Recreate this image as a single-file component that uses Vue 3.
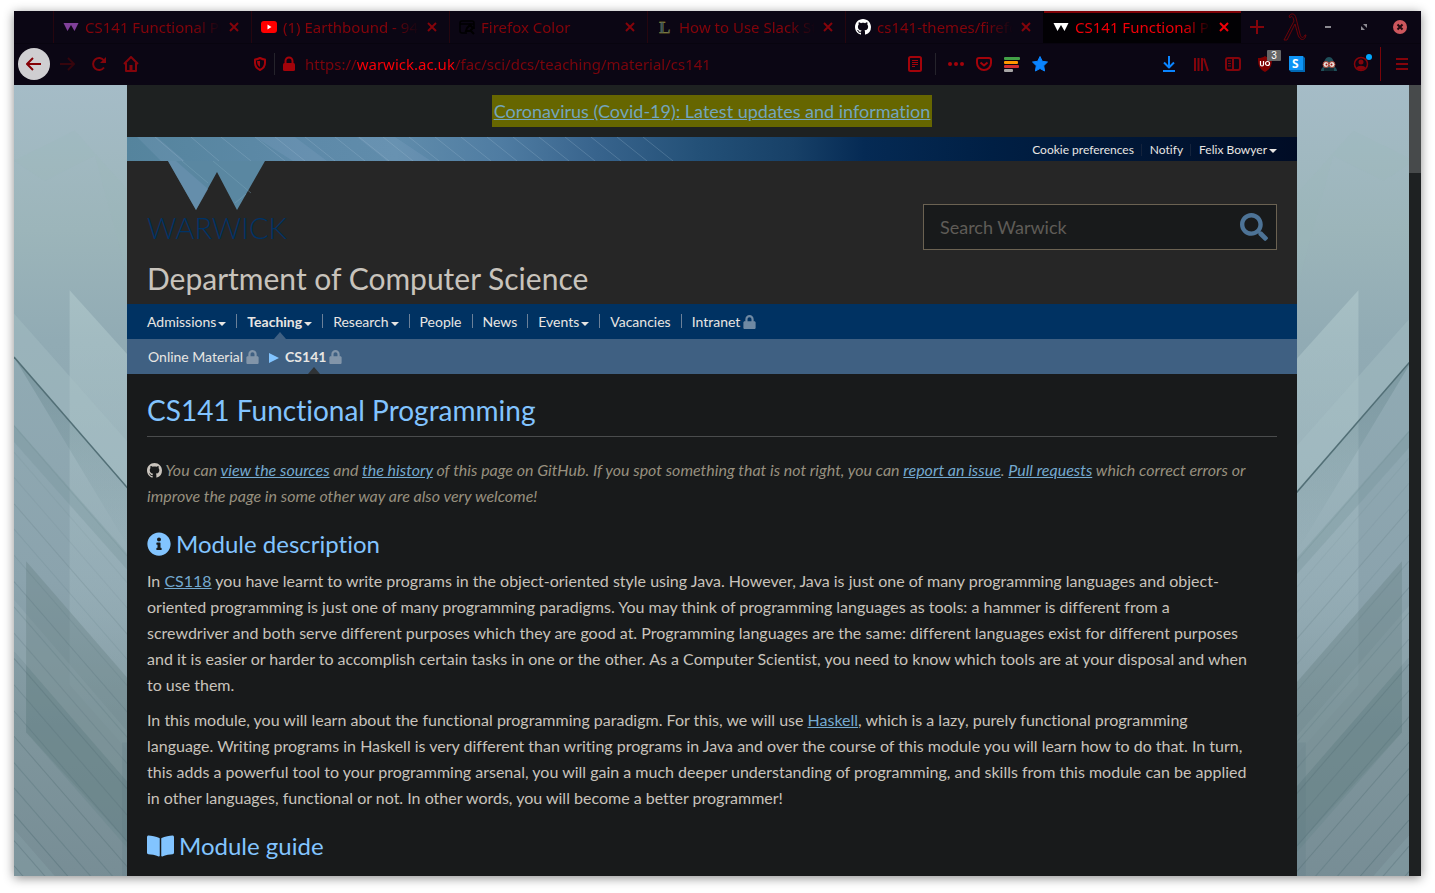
<script setup>
import { ref } from 'vue'

const tabs = [
  { title: 'CS141 Functional Programming', icon: 'warwick', tint: '#80409a' },
  { title: '(1) Earthbound - 94 minutes', icon: 'youtube' },
  { title: 'Firefox Color', icon: 'color' },
  { title: 'How to Use Slack Status', icon: 'letter' },
  { title: 'cs141-themes/firefox', icon: 'github' },
  { title: 'CS141 Functional Programming', icon: 'warwick', tint: '#ffffff', active: true },
]

const nav = [
  { label: 'Admissions', menu: true },
  { label: 'Teaching', menu: true, current: true },
  { label: 'Research', menu: true },
  { label: 'People' },
  { label: 'News' },
  { label: 'Events', menu: true },
  { label: 'Vacancies' },
  { label: 'Intranet', locked: true },
]

const address = ref('https://warwick.ac.uk/fac/sci/dcs/teaching/material/cs141')
const query = ref('')

const stripes = Array.from({ length: 18 }, (_, i) => ({
  y: 337 + Math.round(i * 25.6),
  o: 0.05 + i * 0.018 + (i % 3 === 0 ? 0.06 : 0),
}))

const githubPath =
  'M8 0C3.58 0 0 3.58 0 8c0 3.54 2.29 6.53 5.47 7.59.4.07.55-.17.55-.38 0-.19-.01-.82-.01-1.49-2.01.37-2.53-.49-2.69-.94-.09-.23-.48-.94-.82-1.13-.28-.15-.68-.52-.01-.53.63-.01 1.08.58 1.23.82.72 1.21 1.87.87 2.33.66.07-.52.28-.87.51-1.07-1.78-.2-3.64-.89-3.64-3.95 0-.87.31-1.59.82-2.15-.08-.2-.36-1.02.08-2.12 0 0 .67-.21 2.2.82.64-.18 1.32-.27 2-.27s1.36.09 2 .27c1.53-1.04 2.2-.82 2.2-.82.44 1.1.16 1.92.08 2.12.51.56.82 1.27.82 2.15 0 3.07-1.87 3.75-3.65 3.95.29.25.54.73.54 1.48 0 1.07-.01 1.93-.01 2.2 0 .21.15.46.55.38A8.01 8.01 0 0 0 16 8c0-4.42-3.58-8-8-8z'
const lockPath =
  'M400 224h-24v-72C376 68.2 307.8 0 224 0S72 68.2 72 152v72H48c-26.5 0-48 21.5-48 48v192c0 26.5 21.5 48 48 48h352c26.5 0 48-21.5 48-48V272c0-26.5-21.5-48-48-48zm-104 0H152v-72c0-39.7 32.3-72 72-72s72 32.3 72 72v72z'
</script>

<template>
  <div class="desktop">
    <div class="window">
      <header class="chrome">
        <div class="tab-row">
          <div class="tabs">
            <div v-for="(tab, i) in tabs" :key="i" class="tab" :class="{ active: tab.active }">
              <svg class="favicon" viewBox="0 0 16 16" aria-hidden="true">
                <path v-if="tab.icon === 'warwick'" :fill="tab.tint" d="M.5 4h15l-4 8L8 6l-3.500 6z" />
                <g v-else-if="tab.icon === 'youtube'">
                  <rect y="2" width="16" height="12" rx="3" fill="#f00" />
                  <path d="M6.500 5.500v5l4-2.500z" fill="#fff" />
                </g>
                <g v-else-if="tab.icon === 'color'" fill="none" stroke="#000" stroke-width="1.500">
                  <path d="M8 14H3a2 2 0 0 1-2-2V4a2 2 0 0 1 2-2h10a2 2 0 0 1 2 2v6M1 5h14" />
                  <path d="M7 12l1-3 3-3 3 3-3 3zM12 12l3 3" stroke-width="2" />
                </g>
                <text v-else-if="tab.icon === 'letter'" x="2" y="14" class="letter">L</text>
                <path v-else :d="githubPath" fill="#fff" />
              </svg>
              <span class="tab-title">{{ tab.title }}</span>
              <button class="close" type="button" aria-label="Close tab">
                <svg viewBox="0 0 10 10"><path d="M1 1l8 8M9 1l-8 8" /></svg>
              </button>
            </div>
          </div>
          <button class="tool" type="button" aria-label="New tab">
            <svg class="i16 plus" viewBox="0 0 16 16"><path d="M8 1v14M1 8h14" /></svg>
          </button>
          <svg class="lambda" viewBox="0 0 24 28" aria-hidden="true">
            <path d="M6 3C8 0 12 0 13 5l4 16c1 4 3 5 5 1h1c-1 6-6 6-8 0L12 11 4 27H1L11 8C10 3 8 2 7 5z" />
          </svg>
          <div class="controls">
            <button type="button" aria-label="Minimise">
              <svg class="i16" viewBox="0 0 16 16"><path d="M5 8h6" stroke="#8c8a91" stroke-width="2" /></svg>
            </button>
            <button type="button" aria-label="Restore">
              <svg class="i16" viewBox="0 0 16 16" fill="#8c8a91"><path d="M7 5h4v4zM5 7v4h4z" /></svg>
            </button>
            <button type="button" aria-label="Close window">
              <svg class="i16" viewBox="0 0 16 16">
                <circle cx="8" cy="8" r="7" fill="#cc575d" />
                <path d="M5.500 5.500l5 5M10.500 5.500l-5 5" stroke="#200a10" stroke-width="2" />
              </svg>
            </button>
          </div>
        </div>

        <div class="nav-row">
          <button class="tool back" type="button" aria-label="Back">
            <svg class="i16 line" viewBox="0 0 16 16"><path d="M15 8H1M7 2L1 8l6 6" /></svg>
          </button>
          <button class="tool dim" type="button" aria-label="Forward">
            <svg class="i16 line" viewBox="0 0 16 16"><path d="M1 8h14M9 2l6 6-6 6" /></svg>
          </button>
          <button class="tool" type="button" aria-label="Reload">
            <svg class="i16 line" viewBox="0 0 16 16"><path d="M13 11.500A6 6 0 1 1 13 4.500" /><path d="M15 1v6H9z" fill="currentColor" stroke="none" /></svg>
          </button>
          <button class="tool" type="button" aria-label="Home">
            <svg class="i16 line" viewBox="0 0 16 16"><path d="M1 8l7-7 7 7M3 7v8h10V7" /><path d="M6.500 9h3v6h-3z" fill="currentColor" stroke="none" /></svg>
          </button>
          <span class="spacer"></span>

          <div class="urlbar">
            <button class="page-action" type="button" aria-label="Tracking protection">
              <svg class="i14 line" viewBox="0 0 14 16"><path d="M7 2C9 3 11 3.500 12 3.500V7c0 4-2 5.500-5 7-3-1.500-5-3-5-7V3.500C3 3.500 5 3 7 2z" /><path d="M7 5v6c-2-1-3-3-3-6z" fill="currentColor" stroke="none" /></svg>
            </button>
            <span class="rule"></span>
            <button class="page-action" type="button" aria-label="Connection is secure">
              <svg class="i14" viewBox="0 0 14 16"><path d="M3.500 8V5a3.500 3.500 0 0 1 7 0v3" fill="none" stroke="currentColor" stroke-width="2" /><rect x="1" y="7" width="12" height="8" rx="1.500" fill="currentColor" /></svg>
            </button>
            <input v-model="address" class="address" type="text" aria-label="Address" />
            <button class="page-action" type="button" aria-label="Reader view">
              <svg class="i16 line" viewBox="0 0 16 16"><rect x="2" y="1" width="12" height="14" rx="1.500" /><path d="M5 4.500h6M5 6.500h6M5 8.500h6M5 10.500h3" stroke-width="1" /></svg>
            </button>
            <span class="rule wide"></span>
            <button class="page-action" type="button" aria-label="Page actions">
              <svg class="i16" viewBox="0 0 16 16" fill="currentColor"><circle cx="2" cy="8" r="2" /><circle cx="8" cy="8" r="2" /><circle cx="14" cy="8" r="2" /></svg>
            </button>
            <button class="page-action" type="button" aria-label="Save to Pocket">
              <svg class="i16 line" viewBox="0 0 16 16"><path d="M3 2h10a2 2 0 0 1 2 2v3a7 7 0 0 1-14 0V4a2 2 0 0 1 2-2z" /><path d="M4.500 6.500L8 9.500l3.500-3" /></svg>
            </button>
            <button class="page-action" type="button" aria-label="Page sources">
              <svg class="i16" viewBox="0 0 16 16"><rect y="1" width="16" height="3" rx="1" fill="#43a047" /><rect y="5" width="14" height="3" rx="1" fill="#ff9800" /><rect y="9" width="15" height="3" rx="1" fill="#d32f2f" /><rect y="13" width="9" height="3" rx="1" fill="#a8a6a6" /></svg>
            </button>
            <button class="page-action" type="button" aria-label="Edit bookmark">
              <svg class="i16" viewBox="0 0 16 16"><path d="M8 .5l2.300 4.800 5.200.7-3.800 3.700.9 5.300L8 12.500 3.400 15l.9-5.300L.5 6l5.200-.7z" fill="#0a84ff" stroke="#0a84ff" stroke-linejoin="round" /></svg>
            </button>
          </div>
          <span class="spacer"></span>

          <button class="tool blue" type="button" aria-label="Downloads">
            <svg class="i16 line" viewBox="0 0 16 16"><path d="M8 0v11M3 6.500l5 5 5-5M2 15h12" /></svg>
          </button>
          <button class="tool" type="button" aria-label="Library">
            <svg class="i16" viewBox="0 0 16 16" stroke="currentColor" stroke-width="2"><path d="M2 2v13M5.500 2v13M9 2v13M11 2.500l4 12.500" /></svg>
          </button>
          <button class="tool" type="button" aria-label="Sidebars">
            <svg class="i16 line" viewBox="0 0 16 16"><rect x="1" y="2" width="14" height="12" rx="2" /><path d="M8 2v12" /><path d="M3 5h3M3 7.500h3M3 10h3" stroke-width="1" /></svg>
          </button>
          <button class="tool" type="button" aria-label="uBlock Origin">
            <svg class="i16" viewBox="0 0 16 16"><path d="M8 0c2 1.500 4 2 7 2 0 7-1 11-7 14C2 13 1 9 1 2c3 0 5-.5 7-2z" fill="#800000" /><path d="M3.500 5v3.500a1.500 1.500 0 0 0 3 0V5" fill="none" stroke="#fff" stroke-width="1.200" /><circle cx="10.500" cy="7.500" r="2" fill="none" stroke="#fff" stroke-width="1.200" /></svg>
            <span class="badge">3</span>
          </button>
          <button class="tool" type="button" aria-label="Stylus">
            <svg class="i16" viewBox="0 0 16 16"><path d="M0 0h14l2 2v14H2l-2-2z" fill="#0068b4" /><rect width="14" height="14" fill="#0f94f5" /><text x="3" y="12" class="ess">S</text></svg>
          </button>
          <button class="tool" type="button" aria-label="Privacy mask">
            <svg class="i16" viewBox="0 0 16 16"><path d="M0 15c0-3 2-3 3-6 0-5 2-8 5-8s5 3 5 8c1 3 3 3 3 6z" fill="#1f4f5a" /><path d="M3 12h10v3H3z" fill="#122a32" /><circle cx="5" cy="8.500" r="3" fill="#e8ded8" stroke="#a33a2c" /><circle cx="11" cy="8.500" r="3" fill="#e8ded8" stroke="#a33a2c" /><circle cx="5.500" cy="8.500" r="1" fill="#a01818" /><circle cx="10.500" cy="8.500" r="1" fill="#a01818" /></svg>
          </button>
          <button class="tool" type="button" aria-label="Account">
            <svg class="i16" viewBox="0 0 16 16"><circle cx="8" cy="8" r="6.500" fill="none" stroke="currentColor" stroke-width="1.500" /><circle cx="8" cy="6" r="2.500" fill="currentColor" /><path d="M3.500 12c1-3 8-3 9 0-2 2.500-7 2.500-9 0z" fill="currentColor" /></svg>
            <span class="dot"></span>
          </button>
          <span class="menu-rule"></span>
          <button class="tool" type="button" aria-label="Menu">
            <svg class="i16" viewBox="0 0 16 16" stroke="currentColor" stroke-width="2"><path d="M2 3h12M2 8h12M2 13h12" /></svg>
          </button>
        </div>
      </header>

      <div class="viewport">
        <div v-for="side in ['left', 'right']" :key="side" class="gutter" :class="side">
          <svg :viewBox="side === 'left' ? '0 0 113 791' : '5 0 113 791'" preserveAspectRatio="xMinYMin slice" aria-hidden="true">
            <defs>
              <linearGradient :id="side + '-sky'" x1="0" y1="0" x2="0" y2="1">
                <stop offset="0" stop-color="#a5bcc7" />
                <stop offset=".18" stop-color="#9cb5ba" />
                <stop offset=".32" stop-color="#91abb4" />
                <stop offset=".62" stop-color="#8ba3ad" />
                <stop offset=".8" stop-color="#7f969d" />
                <stop offset="1" stop-color="#778d95" />
              </linearGradient>
              <linearGradient :id="side + '-shade'" x1="0" y1="0" x2="0" y2="1">
                <stop offset="0" stop-color="#5f7f86" stop-opacity=".4" />
                <stop offset="1" stop-color="#6f8f96" stop-opacity="0" />
              </linearGradient>
              <linearGradient :id="side + '-glow'" x1="0" y1="0" x2="0" y2="1">
                <stop offset="0" stop-color="#b2cacd" stop-opacity=".6" />
                <stop offset=".7" stop-color="#a0b8c0" stop-opacity=".4" />
                <stop offset="1" stop-color="#90a8b0" stop-opacity=".15" />
              </linearGradient>
            </defs>
            <rect width="118" height="791" :fill="`url(#${side}-sky)`" />
            <path d="M0 75L60 45l58 65v100L80 70 30 95z" fill="#9dbabb" opacity=".2" />
            <path d="M55 203l63 70v391l-63-71z" :fill="`url(#${side}-glow)`" />
            <path d="M0 226l118 133v46L0 269z" fill="#a7c0c6" opacity=".4" />
            <path d="M0 269l118 136v60z" :fill="`url(#${side}-shade)`" />
            <path d="M0 336l118 134v16L0 353z" fill="#759298" opacity=".3" />
            <path d="M0 509l118 137v50L0 560z" fill="#a2b8bf" opacity=".25" />
            <path d="M12 471l106 122v162L12 640z" fill="#647f81" opacity=".35" />
            <path d="M0 560l118 136v65L12 640V574z" fill="#5f7e84" opacity=".25" />
            <path d="M107 650h11v141h-11z" fill="#5b7a80" opacity=".2" />
            <path d="M0 736l48 55H0z" fill="#90a8b0" opacity=".3" />
            <path v-for="s in stripes" :key="s.y" :d="`M0 ${s.y}l118 136`" stroke="#4c6970" fill="none" :opacity="s.o" />
            <path d="M0 269l118 136" stroke="#526f76" stroke-width="1.500" fill="none" />
          </svg>
        </div>

        <div class="page">
          <div class="notice">
            <a href="#covid">Coronavirus (Covid-19): Latest updates and information</a>
          </div>

          <div class="masthead">
            <svg class="streaks" viewBox="0 0 720 24" preserveAspectRatio="xMinYMin slice" aria-hidden="true">
              <path d="M10 0h20l28 24H34zM128 0h40l32 24h-34zM230 0h38l36 24h-44z" fill="#9ab4d6" opacity=".15" />
              <path d="M28 0l28 24M64 0l28 24M94 0l30 24M128 0l30 24M148 0l30 24M178 0l30 24M208 0l30 24M232 0l30 24M256 0l30 24M282 0l30 24M308 0l30 24M334 0l30 24M360 0l30 24M386 0l30 24M412 0l30 24M438 0l30 24M464 0l30 24M490 0l30 24M516 0l30 24" stroke="#a6c5d6" opacity=".25" fill="none" />
            </svg>
            <nav class="utility" aria-label="Account">
              <a href="#cookies">Cookie preferences</a>
              <a href="#notify">Notify</a>
              <a href="#account">Felix Bowyer<span class="caret"></span></a>
            </nav>
          </div>

          <div class="brand">
            <a class="logo" href="#warwick" aria-label="Warwick home">
              <svg viewBox="0 0 98 49" aria-hidden="true">
                <path d="M0 0h97L69 49 49 11 28 49z" fill="#5a87a1" />
                <path d="M0 0h8l32 28-12 21z" fill="#6c93b2" opacity=".6" />
                <path d="M14 0l26 22M45 0l38 32M67 42l11-9" stroke="#80a9bd" opacity=".4" fill="none" />
              </svg>
              <span>WARWICK</span>
            </a>
            <form class="search" role="search" @submit.prevent>
              <input v-model="query" type="search" placeholder="Search Warwick" aria-label="Search Warwick" />
              <button type="submit" aria-label="Search">
                <svg viewBox="0 0 512 512"><path fill="currentColor" d="M505 442.700L405.300 343c-4.500-4.500-10.600-7-17-7H372c27.600-35.300 44-79.700 44-128C416 93.100 322.900 0 208 0S0 93.100 0 208s93.100 208 208 208c48.300 0 92.700-16.400 128-44v16.300c0 6.400 2.500 12.500 7 17l99.700 99.700c9.400 9.400 24.600 9.400 33.900 0l28.300-28.300c9.400-9.400 9.400-24.600.1-34zM208 336c-70.700 0-128-57.200-128-128 0-70.700 57.200-128 128-128 70.700 0 128 57.200 128 128 0 70.700-57.200 128-128 128z" /></svg>
              </button>
            </form>
            <p class="department">Department of Computer Science</p>
          </div>

          <nav class="primary" aria-label="Department">
            <a v-for="item in nav" :key="item.label" href="#section" :class="{ current: item.current }">
              {{ item.label }}<span v-if="item.menu" class="caret"></span>
              <svg v-if="item.locked" class="lock" viewBox="0 0 448 512" aria-hidden="true"><path :d="lockPath" /></svg>
            </a>
          </nav>

          <nav class="secondary" aria-label="Breadcrumb">
            <a href="#material">Online Material<svg class="lock" viewBox="0 0 448 512" aria-hidden="true"><path :d="lockPath" /></svg></a>
            <svg class="arrow" viewBox="0 0 10 10" aria-hidden="true"><path d="M0 0l10 5-10 5z" /></svg>
            <a href="#cs141" class="current">CS141<svg class="lock" viewBox="0 0 448 512" aria-hidden="true"><path :d="lockPath" /></svg></a>
          </nav>

          <main>
            <h1>CS141 Functional Programming</h1>
            <p class="note">
              <svg class="gh" viewBox="0 0 16 16" aria-hidden="true"><path :d="githubPath" /></svg>
              You can <a href="#src">view the sources</a> and <a href="#history">the history</a> of this page on GitHub. If you spot something that is not right, you can <a href="#issue">report an issue</a>. <a href="#pulls">Pull requests</a> which correct errors or improve the page in some other way are also very welcome!
            </p>

            <h2>
              <svg class="info" viewBox="0 0 512 512" aria-hidden="true"><path d="M256 8C119.043 8 8 119.083 8 256c0 136.997 111.043 248 248 248s248-111.003 248-248C504 119.083 392.957 8 256 8zm0 110c23.196 0 42 18.804 42 42s-18.804 42-42 42-42-18.804-42-42 18.804-42 42-42zm56 254c0 6.627-5.373 12-12 12h-88c-6.627 0-12-5.373-12-12v-24c0-6.627 5.373-12 12-12h12v-64h-12c-6.627 0-12-5.373-12-12v-24c0-6.627 5.373-12 12-12h64c6.627 0 12 5.373 12 12v100h12c6.627 0 12 5.373 12 12v24z" /></svg>
              Module description
            </h2>
            <p>In <a href="#cs118">CS118</a> you have learnt to write programs in the object-oriented style using Java. However, Java is just one of many programming languages and object-oriented programming is just one of many programming paradigms. You may think of programming languages as tools: a hammer is different from a screwdriver and both serve different purposes which they are good at. Programming languages are the same: different languages exist for different purposes and it is easier or harder to accomplish certain tasks in one or the other. As a Computer Scientist, you need to know which tools are at your disposal and when to use them.</p>
            <p>In this module, you will learn about the functional programming paradigm. For this, we will use <a href="#haskell">Haskell</a>, which is a lazy, purely functional programming language. Writing programs in Haskell is very different than writing programs in Java and over the course of this module you will learn how to do that. In turn, this adds a powerful tool to your programming arsenal, you will gain a much deeper understanding of programming, and skills from this module can be applied in other languages, functional or not. In other words, you will become a better programmer!</p>

            <h2>
              <svg class="book" viewBox="0 0 576 512" aria-hidden="true"><path d="M542.220 32.050c-54.800 3.110-163.720 14.430-230.960 55.590-4.640 2.840-7.270 7.890-7.270 13.170v363.870c0 11.550 12.630 18.850 23.280 13.490 69.180-34.820 169.230-44.320 218.700-46.920 16.890-.89 30.020-14.430 30.020-30.660V62.750c.01-17.710-15.350-31.740-33.770-30.700zM264.730 87.640C197.500 46.480 88.580 35.170 33.780 32.050 15.360 31.010 0 45.040 0 62.750V400.600c0 16.240 13.130 29.780 30.020 30.660 49.490 2.600 149.590 12.110 218.770 46.950 10.620 5.350 23.210-1.940 23.210-13.460V100.630c0-5.290-2.620-10.140-7.270-12.990z" /></svg>
              Module guide
            </h2>
          </main>
        </div>

        <div class="scrollbar"><div class="thumb"></div></div>
      </div>
    </div>
  </div>
</template>

<style>
body {
  background: #fff;
}
</style>

<style scoped>
* {
  box-sizing: border-box;
}
button {
  display: flex;
  align-items: center;
  justify-content: center;
  padding: 0;
  border: 0;
  background: none;
  color: inherit;
}
svg {
  display: block;
  flex: none;
}
.desktop {
  display: flex;
  height: 100vh;
  padding: 11px 14px 17px;
}
.window {
  flex: 1;
  min-width: 0;
  display: flex;
  flex-direction: column;
  box-shadow: 0 2px 10px rgba(0, 0, 0, 0.45);
}

/* Browser chrome */
.chrome {
  background: #0b0614;
  color: #84040b;
  font-family: "Noto Sans", sans-serif;
}
.tab-row {
  display: flex;
  align-items: center;
  height: 33px;
  padding: 0 3px 0 39px;
  border-bottom: 1px solid #08040f;
}
.tabs {
  display: flex;
  flex: 0 1 1188px;
  min-width: 0;
  height: 100%;
}
.tab {
  flex: 0 1 198px;
  min-width: 0;
  display: flex;
  align-items: center;
  gap: 6px;
  padding: 0 10px 0 9px;
  border-left: 1px solid #26060f;
  font-size: 15px;
}
.tab.active {
  background: #020104;
  border-left-color: #020104;
  box-shadow: inset 0 2px #7d0207;
  color: #f00008;
}
.favicon {
  width: 16px;
  height: 16px;
}
.letter {
  font: bold 17px "Liberation Serif", serif;
  fill: #34505c;
  stroke: #b5a02d;
  stroke-width: 0.3px;
}
.tab-title {
  flex: 1;
  min-width: 0;
  overflow: hidden;
  white-space: nowrap;
  mask-image: linear-gradient(to left, transparent 0, #000 28px);
}
.close {
  width: 14px;
  height: 14px;
}
.close svg {
  width: 10px;
  height: 10px;
  stroke: currentColor;
  stroke-width: 2px;
}
.i16 {
  width: 16px;
  height: 16px;
}
.i14 {
  width: 14px;
  height: 16px;
}
.line {
  fill: none;
  stroke: currentColor;
  stroke-width: 2px;
  stroke-linejoin: round;
}
.plus {
  stroke: currentColor;
  stroke-width: 2px;
}
.lambda {
  width: 24px;
  height: 28px;
  margin-left: 10px;
  fill: #0d0613;
  stroke: #6b0309;
  stroke-width: 1px;
}
.controls {
  display: flex;
  margin-left: auto;
}
.controls button {
  width: 36px;
  height: 32px;
}
.nav-row {
  display: flex;
  align-items: center;
  height: 41px;
  padding: 0 3px 1px 4px;
}
.tool {
  position: relative;
  flex: none;
  width: 32px;
  height: 32px;
}
.back {
  margin-right: 1px;
  border-radius: 50%;
  background: #cfced1;
  color: #850006;
}
.dim {
  color: #36050d;
}
.blue {
  color: #0a84ff;
}
.spacer {
  flex: 0 1 99px;
}
.urlbar {
  flex: 1;
  min-width: 0;
  display: flex;
  align-items: center;
  height: 32px;
  color: #a3030a;
}
.page-action {
  flex: none;
  width: 28px;
  height: 28px;
}
.rule {
  width: 1px;
  height: 22px;
  background: #25232b;
}
.rule.wide {
  margin: 0 6px;
}
.address {
  flex: 1;
  min-width: 0;
  height: 28px;
  padding: 0 2px;
  border: 0;
  outline: 0;
  font: 15px "Noto Sans", sans-serif;
  color: transparent;
  background: linear-gradient(to right, #7b040c 53px, #fb0006 53px, #fb0006 151px, #7b040c 151px);
  background-clip: text;
}
.badge {
  position: absolute;
  top: 2px;
  right: 0;
  width: 14px;
  height: 11px;
  border-radius: 1px;
  background: #666;
  color: #fff;
  font-size: 10px;
  line-height: 11px;
}
.dot {
  position: absolute;
  top: 6px;
  right: 5px;
  width: 6px;
  height: 6px;
  border-radius: 50%;
  background: #00a8ff;
}
.ess {
  font: bold 12px "Noto Sans", sans-serif;
  fill: #fff;
}
.menu-rule {
  width: 1px;
  height: 34px;
  margin: 0 5px 0 3px;
  background: #7a0409;
}

/* Page viewport */
.viewport {
  flex: 1;
  min-height: 0;
  display: grid;
  grid-template-columns: max(0px, round(up, (100% - 1182px) / 2, 1px)) minmax(0, 1170px) 1fr 12px;
  overflow: hidden;
  background: #8ba3ad;
  font-family: Lato, sans-serif;
  font-variant-ligatures: none;
}
.gutter {
  grid-row: 1;
  overflow: hidden;
}
.gutter.left {
  grid-column: 1;
}
.gutter.right {
  grid-column: 3;
  transform: scaleX(-1);
}
.gutter svg {
  width: 100%;
  height: 100%;
}
.page {
  grid-column: 2;
  grid-row: 1;
  background: #181a1b;
  color: #c8c3bc;
}
.scrollbar {
  grid-column: 4;
  grid-row: 1;
  background: #1e2122;
}
.thumb {
  height: 88px;
  background: #474a4b;
}
.notice {
  padding: 10px 0;
  background: #1e2121;
  text-align: center;
  font-size: 18px;
  line-height: 32px;
}
.notice a {
  display: inline-block;
  padding: 0 2px;
  background: #666600;
  color: #73a5bd;
}
.masthead {
  position: relative;
  display: flex;
  justify-content: flex-end;
  height: 24px;
  padding: 0 20px;
  background: linear-gradient(to right, #55849d 0, #5e8aa9 16%, #608cab 23%, #4f7ca2 32%, #38648d 40%, #235077 49%, #174067 57%, #052a54 63%, #001f44 74%, #000c25 100%);
}
.streaks {
  position: absolute;
  inset: 0 auto 0 0;
  width: 720px;
  height: 24px;
}
.utility {
  position: relative;
  display: flex;
  align-items: center;
  padding-top: 2px;
  font-size: 12px;
  line-height: 12px;
}
.utility a {
  color: #e8e6e3;
  text-decoration: none;
}
.utility a + a {
  margin-left: 7px;
  padding-left: 8px;
  border-left: 1px solid #14233c;
}
.caret {
  display: inline-block;
  margin-left: 2px;
  border: 4px solid transparent;
  border-top-color: currentColor;
  border-bottom: 0;
  vertical-align: middle;
}
.brand {
  display: grid;
  grid-template-columns: 1fr 354px;
  padding: 0 20px 6px;
  background: #262626;
}
.logo {
  color: #003366;
  text-decoration: none;
}
.logo svg {
  width: 98px;
  height: 49px;
  margin-left: 21px;
}
.logo span {
  display: block;
  font-size: 29px;
  font-weight: 300;
  line-height: 36px;
}
.search {
  display: flex;
  align-items: center;
  height: 46px;
  margin-top: 43px;
  padding: 0 8px 0 16px;
  border: 1px solid #6b6252;
  background: #181a1b;
}
.search input {
  flex: 1;
  min-width: 0;
  padding: 0;
  border: 0;
  outline: 0;
  background: none;
  color: #c8c3bc;
  font: 18px Lato, sans-serif;
}
.search input::placeholder {
  color: #5f5c57;
}
.search button {
  color: #4d7396;
}
.search button svg {
  width: 28px;
  height: 28px;
}
.department {
  grid-column: 1 / -1;
  margin: 8px 0 0;
  font-size: 30px;
  line-height: 40px;
}
.primary,
.secondary {
  display: flex;
  align-items: center;
  height: 35px;
  padding: 0 20px;
  font-size: 14px;
}
.primary {
  background: #003262;
}
.secondary {
  padding-left: 21px;
  background: #3f6082;
}
.primary a,
.secondary a {
  position: relative;
  display: flex;
  align-items: center;
  height: 35px;
  color: #e8e6e3;
  text-decoration: none;
}
.primary a + a {
  margin-left: 21px;
}
.primary a + a::before {
  content: "";
  position: absolute;
  top: 10px;
  left: -11px;
  width: 1px;
  height: 14px;
  background: #6a8099;
}
.primary .caret {
  margin-top: 4px;
}
.current {
  font-weight: bold;
}
.current::after {
  content: "";
  position: absolute;
  bottom: 0;
  left: 50%;
  margin-left: -6px;
  border: 6px solid transparent;
  border-top: 0;
  border-bottom: 7px solid #3f6082;
}
.secondary .current::after {
  border-bottom-color: #2f3336;
}
.lock {
  width: 13px;
  height: 14px;
  margin-left: 3px;
  fill: #6f89a3;
}
.secondary .lock {
  fill: #8295a9;
}
.arrow {
  width: 10px;
  height: 10px;
  margin: 2px 6px 0 10px;
  fill: #82c4ff;
}
main {
  padding: 20px 20px 15px;
  font-size: 16px;
  line-height: 26px;
}
h1 {
  margin: 0 0 20px;
  padding-bottom: 10px;
  border-bottom: 1px solid #4a4c4d;
  color: #82c4ff;
  font-size: 28px;
  font-weight: 400;
  line-height: 32px;
}
main p {
  max-width: 1106px;
  margin: 0 0 9px;
}
main p a {
  color: #74a9cf;
}
main .note {
  color: #97907f;
  font-style: italic;
  margin-bottom: 20px;
}
.gh {
  display: inline-block;
  width: 15px;
  height: 15px;
  fill: #c8c3bc;
  vertical-align: -2px;
}
h2 {
  display: flex;
  align-items: center;
  gap: 5px;
  margin: 20px 0 9px;
  color: #82c4ff;
  font-size: 24px;
  font-weight: 400;
  line-height: 30px;
}
h2 svg {
  fill: currentColor;
}
.info {
  width: 24px;
  height: 24px;
}
.book {
  width: 27px;
  height: 24px;
}
</style>
